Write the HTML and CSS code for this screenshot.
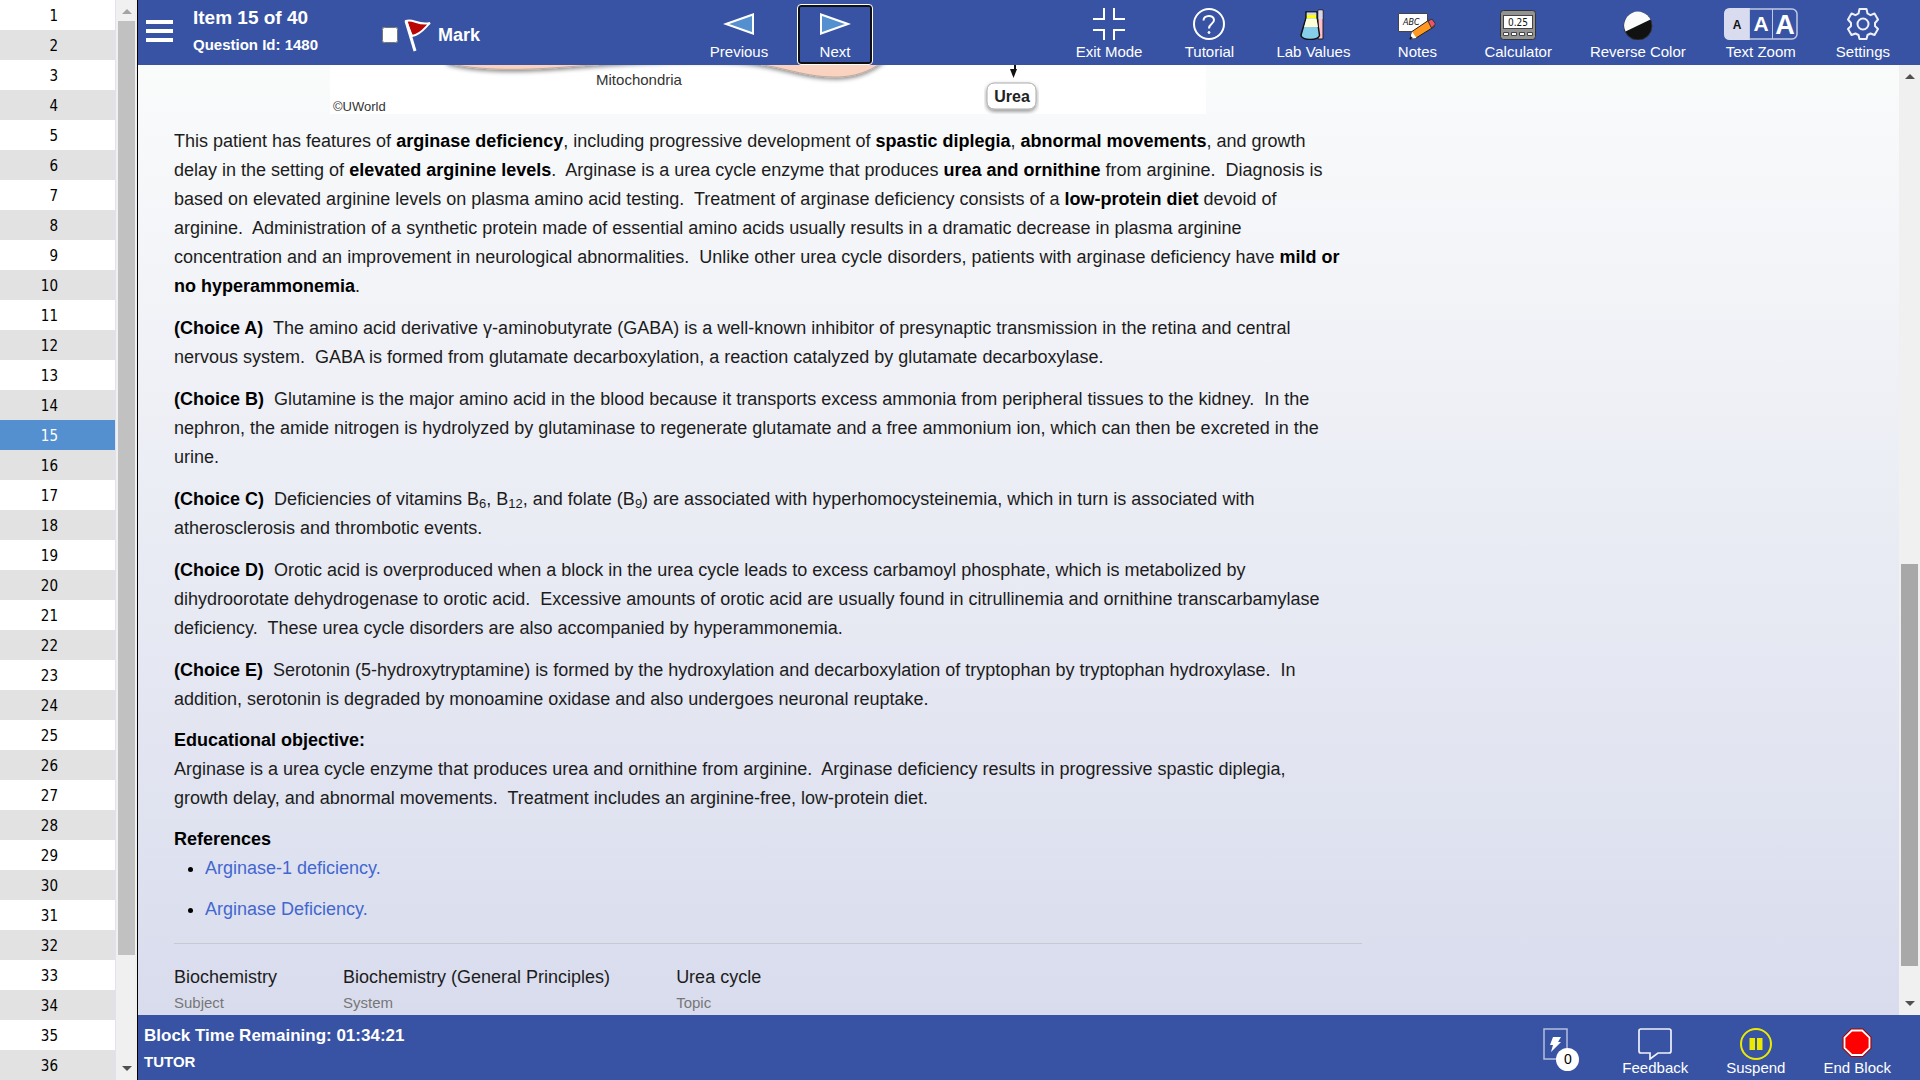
FILE: index.html
```html
<!DOCTYPE html>
<html lang="en">
<head>
<meta charset="utf-8">
<title>Item 15 of 40</title>
<link rel="stylesheet" href="styles.css">
</head>
<body>
<div class="app">
  <nav class="sidebar" aria-label="Items">
    <ol class="items" id="items"></ol>
    <div class="scrollbar scrollbar-items" aria-hidden="true">
      <svg class="arrow arrow-dim" viewBox="0 0 10 5"><path d="M0 5L5 0L10 5Z"/></svg>
      <div class="track"><div class="thumb"></div><div class="rest"></div></div>
      <svg class="arrow" viewBox="0 0 10 5"><path d="M0 0L5 5L10 0Z"/></svg>
    </div>
  </nav>

  <div class="main">
    <header class="topbar">
      <button class="menu" aria-label="Menu"><svg width="27" height="24" viewBox="0 0 27 24"><path d="M0 3h27M0 12h27M0 21h27" stroke="#fff" stroke-width="4"/></svg></button>
      <div class="item-info">
        <div class="item-number">Item 15 of 40</div>
        <div class="question-id">Question Id: 1480</div>
      </div>
      <label class="mark">
        <input type="checkbox">
        <svg width="28" height="34" viewBox="0 0 28 34"><path d="M2 3C9 0 14 8 26 5C21 9 18 16 8 18Z" fill="#b90504" stroke="#fff" stroke-width="2"/><path d="M2 3L11 33" stroke="#fff" stroke-width="3" fill="none"/></svg>
        <span>Mark</span>
      </label>
      <div class="pager">
        <button class="tool"><svg width="32" height="32" viewBox="0 0 32 32"><path d="M3 16L30 6.500V25.500Z" fill="#5490d0" stroke="#fff" stroke-width="2"/></svg>Previous</button>
        <button class="tool current"><svg width="32" height="32" viewBox="0 0 32 32"><path d="M29 16L2 6.500V25.500Z" fill="#5490d0" stroke="#fff" stroke-width="2"/></svg>Next</button>
      </div>
      <div class="tools">
        <div class="tool-group first">
          <button class="tool"><svg width="34" height="32" viewBox="0 0 34 32" fill="none" stroke="#fff" stroke-width="2"><path d="M12 0V11H1M22 0V11H33M12 32V22H1M22 32V22H33"/></svg>Exit Mode</button>
          <button class="tool"><svg width="34" height="32" viewBox="0 0 34 32" fill="none" stroke="#fff" stroke-width="2"><circle cx="17" cy="16" r="15"/><path d="M11.500 12.500C11.500 6.500 22 6.500 22 12C22 16 17 15.500 17 20.500"/><circle cx="17" cy="24.500" r="1" fill="#fff" stroke-width="1"/></svg>Tutorial</button>
          <button class="tool"><svg width="34" height="32" viewBox="0 0 34 32"><path d="M22 2H27V31H22Z" fill="#ffc0cb" stroke="#222"/><path d="M22.500 2.500H26.500V11H22.500Z" fill="#d5d8ea"/><path d="M10 4H21V10L23.500 27C24 33 4.500 33 5 27L10 10Z" fill="#87ceeb" stroke="#111" stroke-width="1.500"/><path d="M10.500 10.500H20.500L22 19H8.200Z" fill="#ffffd8"/><path d="M10.800 4.500H20.200V7H10.800Z" fill="#d5d8ea"/><path d="M10.800 7H20.200V10H10.800Z" fill="#ff0"/></svg>Lab Values</button>
          <button class="tool"><svg width="40" height="32" viewBox="0 0 40 32"><path d="M1.500 5.500H30.500V23.500H1.500Z" fill="#fff" stroke="#444"/><text x="6" y="17" class="abc">ABC</text><path d="M13 31L15 23.500L32 12L37.500 18.500L19 30Z" fill="#ff9820" stroke="#222"/><path d="M31 13L35 11L38.500 16L34.500 20Z" fill="#ee5468" stroke="#333"/><path d="M13 31L15 23.500L19.500 30Z" fill="#fff"/><path d="M12.500 31.500L13.500 28L16 30.300Z" fill="#111"/></svg>Notes</button>
        </div>
        <div class="tool-group">
          <button class="tool"><svg width="36" height="32" viewBox="0 0 36 32"><rect x=".5" y="2.500" width="35" height="29" rx="3" fill="#939393" stroke="#333"/><rect x="3.500" y="7.500" width="29" height="13" fill="#fff" stroke="#444"/><text x="18" y="17.500" class="digits">0.25</text><g fill="#fff" stroke="#444"><path d="M3.500 24.500h5v3h-5zM11.500 24.500h5v3h-5zM19.500 24.500h5v3h-5zM27.500 24.500h5v3h-5z"/></g></svg>Calculator</button>
          <button class="tool"><svg width="32" height="32" viewBox="0 0 32 32"><circle cx="16" cy="18" r="14" fill="#111" stroke="#333"/><path d="M3.500 23.500A13.500 13.500 0 0 1 28.500 11.500Z" fill="#fafafa"/></svg>Reverse Color</button>
          <button class="tool"><svg width="74" height="32" viewBox="0 0 74 32"><rect x="1" y="1" width="72" height="30" rx="5" fill="none" stroke="#c0c9e5" stroke-width="1.500"/><path d="M6 0H26V32H6Q0 32 0 26V6Q0 0 6 0Z" fill="#d8dcee"/><path d="M48.500 1V31M25.500 1V31" stroke="#c0c9e5"/><text x="13" y="21" class="za">A</text><text x="37" y="23" class="zb">A</text><text x="61" y="26" class="zc">A</text></svg>Text Zoom</button>
          <button class="tool"><svg width="32" height="32" viewBox="0 0 32 32" fill="none" stroke="#eef1fa" stroke-width="2"><path d="M12.500 1H19.500L20.500 5.500L23.500 7.200L27.500 5.500L31 11.500L28 15V18L31 21L27.500 27L23.500 25.500L20.500 27L19.500 31H12.500L11.500 27L8.500 25.500L4.500 27L1 21L4 18V15L1 11.500L4.500 5.500L8.500 7.200L11.500 5.500Z" stroke-linejoin="round"/><circle cx="16" cy="16" r="5.500"/></svg>Settings</button>
        </div>
      </div>
    </header>

    <div class="content">
      <main class="page">
        <figure class="figure">
          <svg width="876" height="49" viewBox="0 0 876 49">
            <defs><filter id="soft" x="-5%" y="-50%" width="110%" height="200%"><feDropShadow dx="0" dy="2" stdDeviation="2" flood-color="#000" flood-opacity=".45"/></filter></defs>
            <g filter="url(#soft)"><path d="M105 -20L118 -2C145 5 185 6 235 2C290 -2 350 -7 400 -4C450 -1 470 12 505 12C530 12 545 3 556 -6L560 -20Z" fill="#f9d3c0" stroke="#c4aa9e" stroke-width="1"/></g>
            <path d="M685 0V4" stroke="#111" stroke-width="2"/><path d="M680 4H687L683.500 13Z" fill="#111"/>
            <rect x="657" y="18" width="49" height="26" rx="7" fill="#fff" stroke="#aaa" filter="url(#soft)"/>
            <text x="682" y="37" class="fig-urea">Urea</text>
            <text x="309" y="20" class="fig-label">Mitochondria</text>
            <text x="3" y="46" class="fig-credit">©UWorld</text>
          </svg>
        </figure>
        <div class="explanation">
          <p>This patient has features of <b>arginase deficiency</b>, including progressive development of <b>spastic diplegia</b>, <b>abnormal movements</b>, and growth delay in the setting of <b>elevated arginine levels</b>.&nbsp; Arginase is a urea cycle enzyme that produces <b>urea and ornithine</b> from arginine.&nbsp; Diagnosis is based on elevated arginine levels on plasma amino acid testing.&nbsp; Treatment of arginase deficiency consists of a <b>low-protein diet</b> devoid of arginine.&nbsp; Administration of a synthetic protein made of essential amino acids usually results in a dramatic decrease in plasma arginine concentration and an improvement in neurological abnormalities.&nbsp; Unlike other urea cycle disorders, patients with arginase deficiency have <b>mild or no hyperammonemia</b>.</p>
          <p><b>(Choice A)</b>&nbsp; The amino acid derivative γ-aminobutyrate (GABA) is a well-known inhibitor of presynaptic transmission in the retina and central nervous system.&nbsp; GABA is formed from glutamate decarboxylation, a reaction catalyzed by glutamate decarboxylase.</p>
          <p><b>(Choice B)</b>&nbsp; Glutamine is the major amino acid in the blood because it transports excess ammonia from peripheral tissues to the kidney.&nbsp; In the nephron, the amide nitrogen is hydrolyzed by glutaminase to regenerate glutamate and a free ammonium ion, which can then be excreted in the urine.</p>
          <p><b>(Choice C)</b>&nbsp; Deficiencies of vitamins B<sub>6</sub>, B<sub>12</sub>, and folate (B<sub>9</sub>) are associated with hyperhomocysteinemia, which in turn is associated with atherosclerosis and thrombotic events.</p>
          <p><b>(Choice D)</b>&nbsp; Orotic acid is overproduced when a block in the urea cycle leads to excess carbamoyl phosphate, which is metabolized by dihydroorotate dehydrogenase to orotic acid.&nbsp; Excessive amounts of orotic acid are usually found in citrullinemia and ornithine transcarbamylase deficiency.&nbsp; These urea cycle disorders are also accompanied by hyperammonemia.</p>
          <p><b>(Choice E)</b>&nbsp; Serotonin (5-hydroxytryptamine) is formed by the hydroxylation and decarboxylation of tryptophan by tryptophan hydroxylase.&nbsp; In addition, serotonin is degraded by monoamine oxidase and also undergoes neuronal reuptake.</p>
          <h2>Educational objective:</h2>
          <p>Arginase is a urea cycle enzyme that produces urea and ornithine from arginine.&nbsp; Arginase deficiency results in progressive spastic diplegia, growth delay, and abnormal movements.&nbsp; Treatment includes an arginine-free, low-protein diet.</p>
          <h2>References</h2>
          <ul class="refs">
            <li><a href="#">Arginase-1 deficiency.</a></li>
            <li><a href="#">Arginase Deficiency.</a></li>
          </ul>
        </div>
        <dl class="meta">
          <div><dd>Biochemistry</dd><dt>Subject</dt></div>
          <div><dd>Biochemistry (General Principles)</dd><dt>System</dt></div>
          <div><dd>Urea cycle</dd><dt>Topic</dt></div>
        </dl>
      </main>
      <div class="scrollbar scrollbar-page" aria-hidden="true">
        <svg class="arrow" viewBox="0 0 10 5"><path d="M0 5L5 0L10 5Z"/></svg>
        <div class="track"><div class="before"></div><div class="thumb"></div><div class="rest"></div></div>
        <svg class="arrow" viewBox="0 0 10 5"><path d="M0 0L5 5L10 0Z"/></svg>
      </div>
    </div>

    <footer class="bottombar">
      <div class="timer">
        <div class="time">Block Time Remaining: 01:34:21</div>
        <div class="mode">TUTOR</div>
      </div>
      <div class="actions">
        <button class="tool flash" aria-label="Flashcards"><svg width="25" height="32" viewBox="0 0 25 32"><path d="M1 1H24V31H1Z" fill="none" stroke="#b4bfdf" stroke-width="1.500"/><path d="M10 9H18L15 14H18L8 24L10 17H7Z" fill="#fff"/></svg><span class="badge">0</span></button>
        <button class="tool"><svg width="34" height="32" viewBox="0 0 34 32" fill="none" stroke="#eef1fa" stroke-width="1.700"><path d="M3 1H31Q33 1 33 3V23Q33 25 31 25H20L12 31V25H3Q1 25 1 23V3Q1 1 3 1Z"/></svg>Feedback</button>
        <button class="tool"><svg width="34" height="32" viewBox="0 0 34 32"><circle cx="17" cy="16" r="15" fill="none" stroke="#eaea00" stroke-width="2"/><path d="M10.500 10H16V22H10.500ZM18 10H23.500V22H18Z" fill="#eaea00"/></svg>Suspend</button>
        <button class="tool"><svg width="30" height="32" viewBox="0 0 30 32"><path d="M9 .5H21L29.500 9V20.500L21 29H9L.5 20.500V9Z" fill="#a40000"/><path d="M9.800 2.500H20.200L27.500 9.700V19.800L20.200 27H9.800L2.500 19.800V9.700Z" fill="red" stroke="#fff" stroke-width="1.800"/></svg>End Block</button>
      </div>
    </footer>
  </div>
</div>
<script src="items.js"></script>
</body>
</html>
```
FILE: styles.css
```css
* { box-sizing: border-box; }
body {
  margin: 0;
  font-family: "Liberation Sans", Arial, sans-serif;
  font-size: 18px;
  line-height: 29px;
  color: #1c1c1c;
}
button { font: inherit; color: inherit; background: none; border: 0; padding: 0; }
.app { display: flex; height: 100vh; overflow: hidden; }

/* item list */
.sidebar { display: flex; flex: none; width: 138px; background: #dfe2f2; border-right: 1px solid #000; }
.items {
  flex: none; width: 115px; height: 100%; margin: 0; padding: 0; overflow: hidden; list-style: none;
  font-family: Tahoma, "DejaVu Sans Condensed", sans-serif; font-size: 15px; color: #000;
}
.items a { display: block; height: 30px; padding-right: 57px; line-height: 32px; text-align: right; color: inherit; text-decoration: none; background: #fff; }
.items li:nth-child(even) a { background: #e2e2e2; }
.items li a[aria-current] { background: #5490d0; color: #fff; }

/* scroll bars */
.scrollbar { display: flex; flex-direction: column; align-items: center; justify-content: space-between; background: #f0f0f0; }
.scrollbar-items { flex: 1; margin-left: 1px; padding: 9px 0; }
.scrollbar-page { flex: none; width: 21px; padding: 9px 0; }
.arrow { flex: none; width: 10px; height: 5px; fill: #505050; }
.arrow-dim { fill: #a3a3a3; }
.track { flex: 1; display: flex; flex-direction: column; width: 17px; margin: 7px 0; }
.thumb { background: #c1c1c1; }
.scrollbar-items .thumb { flex: 934; }
.scrollbar-items .rest { flex: 104; }
.scrollbar-page .before { flex: 479; }
.scrollbar-page .thumb { flex: 403; background: #a8a8a8; }
.scrollbar-page .rest { flex: 28; }

.main { flex: 1; min-width: 0; display: flex; flex-direction: column; }

/* bars */
.topbar, .bottombar { flex: none; display: flex; height: 65px; background: #3853a4; color: #fff; }
.topbar { padding: 0 30px 0 8px; }
.menu { align-self: flex-start; height: 24px; margin-top: 19px; }
.menu svg { display: block; }
.item-info { width: 209px; padding: 4px 0 0 20px; font-weight: bold; line-height: 27px; white-space: nowrap; }
.item-number { font-size: 19px; }
.question-id { font-size: 15px; }
.mark { display: flex; align-items: center; align-self: flex-start; height: 34px; margin-top: 18px; font-weight: bold; gap: 6px; }
.mark input { width: 16px; height: 16px; margin: 0; }
.pager { display: flex; gap: 20px; padding: 4px 0 0; margin-left: 221px; }
.pager .tool { width: 76px; padding-top: 4px; height: 61px; border-radius: 4px; }
.pager .tool.current { border: 1px solid #fff; padding-top: 3px; box-shadow: inset 0 0 0 2px #101010; }
.tool { display: flex; flex-direction: column; align-items: center; min-width: 50px; font-size: 15px; line-height: 24px; white-space: nowrap; }
.tool svg { display: block; flex: none; }
.tools { display: flex; margin-left: auto; padding-top: 8px; gap: 42px; }
.tool-group { display: flex; align-items: flex-start; gap: 38px; }
.tool-group.first { gap: 42px; }

.abc { font: italic 9px "DejaVu Sans Condensed", sans-serif; fill: #111; }
.digits { font: 10px "DejaVu Sans Condensed", sans-serif; text-anchor: middle; fill: #111; }
.za, .zb, .zc { font-family: "Liberation Sans", sans-serif; font-weight: bold; text-anchor: middle; fill: #fff; }
.za { font-size: 12px; fill: #111; }
.zb { font-size: 21px; }
.zc { font-size: 27px; }

/* explanation */
.content { flex: 1; min-height: 0; display: flex; }
.page { flex: 1; min-width: 0; overflow: hidden; padding: 0 36px; background: linear-gradient(#fafbfb, #d9dced); }
.explanation { max-width: 1168px; }
.figure { max-width: 1188px; margin: 0 0 13px; }
.figure svg { display: block; margin: 0 auto; overflow: hidden; background: #fff; }
.fig-label { font-size: 15px; text-anchor: middle; fill: #333; }
.fig-urea { font-size: 16px; font-weight: bold; text-anchor: middle; fill: #222; }
.fig-credit { font-size: 13px; fill: #333; }
p { margin: 0 0 13px; }
p:has(+ h2) { margin-bottom: 12px; }
b, h2 { color: #000; }
h2 { margin: 0; font-size: 18px; line-height: 29px; font-weight: bold; }
sub { font-size: 13px; line-height: 0; vertical-align: -3px; }
.refs { margin: 0; padding-left: 31px; }
.refs li { margin-bottom: 12px; }
.refs li::marker { color: #000; }
.refs a { color: #4267cf; text-decoration: none; }
.meta { display: flex; gap: 66px; max-width: 1188px; margin: 19px 0 0; padding-top: 19px; border-top: 1px solid #c9cacf; }
.meta dd { margin: 0; }
.meta dt { font-size: 15px; line-height: 22px; color: #777; }

.bottombar { justify-content: space-between; padding: 0 29px 0 6px; }
.timer { padding-top: 8px; font-weight: bold; line-height: 26px; white-space: nowrap; }
.time { font-size: 17px; }
.mode { font-size: 15px; }
.actions { display: flex; align-items: flex-start; gap: 38px; padding-top: 13px; }
.actions .tool { line-height: 16px; }
.actions .tool.flash { display: block; position: relative; min-width: 25px; margin-right: 16px; }
.badge { position: absolute; left: 13px; top: 20px; width: 23px; height: 23px; border-radius: 50%; background: #fff; color: #000; line-height: 23px; text-align: center; font-size: 14px; }
```
FILE: items.js
```js
const list = document.getElementById("items");
for (let n = 1; n <= 36; n++) {
  const row = document.createElement("li");
  const link = document.createElement("a");
  link.href = "#";
  link.textContent = n;
  if (n === 15) link.setAttribute("aria-current", "true");
  row.append(link);
  list.append(row);
}
```
